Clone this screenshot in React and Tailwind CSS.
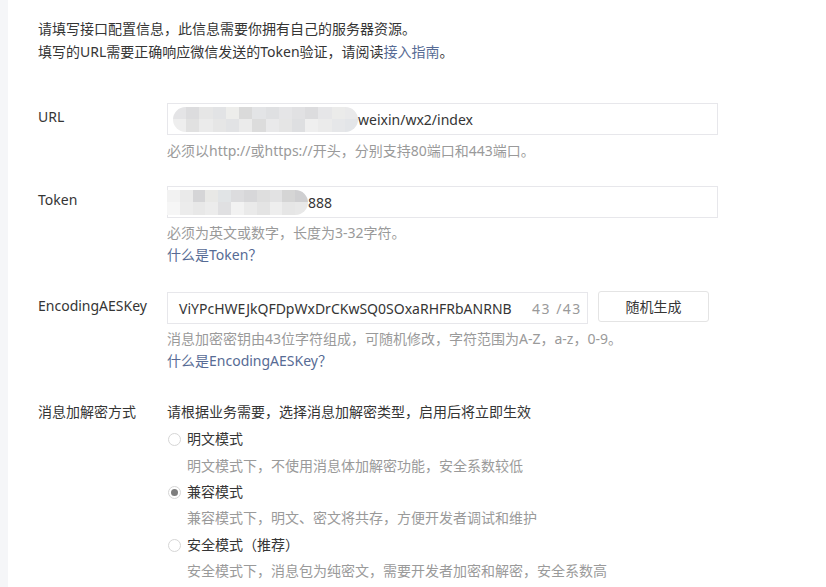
import React from 'react';

const urlBlur = [
  ['#e4e4e6', '#dcdcde', '#e6e6e6', '#e2e3e5', '#ededeb', '#dadada', '#e3e4e6', '#dfe0e2', '#e5e5e7', '#e1e1e3', '#dcdcde', '#e6e6e8', '#ebebea', '#e9e9ea'],
  ['#eeeeee', '#e1e1e1', '#ebebeb', '#e6e6e6', '#e2e3e5', '#ebebeb', '#dcdcdc', '#e9e9ea', '#e5e5e5', '#dedfe1', '#efefef', '#ebebeb', '#e6e7e9', '#e3e5e8'],
];

const tokenBlur = [
  ['#f2f2f2', '#eaeaea', '#d5d5d7', '#e8e8e6', '#e1e4e6', '#dcdcde', '#d7d7d9', '#dedede', '#e2e2e3', '#d5d5d5', '#cfcfd1'],
  ['#f6f6f6', '#ececec', '#e8e8e8', '#ececec', '#e0e0e2', '#f2f2f2', '#eaeaea', '#e4e4e4', '#eeeeee', '#e6e6e6', '#e8e8e8'],
];

const Mosaic = ({ rows, className }) => (
  <div className={`flex flex-col overflow-hidden rounded-r-full ${className}`}>
    {rows.map((row, i) => (
      <div key={i} className="flex flex-1">
        {row.map((c, j) => (
          <div key={j} className="flex-1" style={{ backgroundColor: c }} />
        ))}
      </div>
    ))}
  </div>
);

const Radio = ({ checked, label }) => (
  <div className="flex items-center leading-[22px] text-[#353535]">
    <span className="w-[13px] h-[13px] rounded-full border border-[#d6d6d6] bg-white flex items-center justify-center mr-[6px] ml-[1px]">
      {checked && <span className="w-[7px] h-[7px] rounded-full bg-[#7d7d7d]" />}
    </span>
    {label}
  </div>
);

export default function App() {
  return (
    <div className="flex min-h-[587px] bg-white text-[14px] text-[#353535] font-['Noto_Sans','Noto_Sans_CJK_SC',sans-serif]">
      <div className="w-[8px] bg-[#f5f6f8] shrink-0" />
      <div className="pl-[30px] pt-[17px] flex-1">
        {/* 说明 */}
        <div className="leading-[23px]">
          <p>请填写接口配置信息，此信息需要你拥有自己的服务器资源。</p>
          <p>填写的URL需要正确响应微信发送的Token验证，请阅读<span className="text-[#576b95]">接入指南</span>。</p>
        </div>

        {/* URL */}
        <div className="flex mt-[40px]">
          <div className="w-[129px] pt-[3px] leading-[22px]">URL</div>
          <div>
            <div className="w-[551px] h-[32px] border border-[#e7e7eb] flex items-center">
              <Mosaic rows={urlBlur} className="ml-[5px] w-[185px] h-[25px] rounded-l-full" />
              <span>weixin/wx2/index</span>
            </div>
            <p className="mt-[6px] leading-[20px] text-[#9a9a9a]">必须以http://或https://开头，分别支持80端口和443端口。</p>
          </div>
        </div>

        {/* Token */}
        <div className="flex mt-[25px]">
          <div className="w-[129px] pt-[3px] leading-[22px]">Token</div>
          <div>
            <div className="w-[551px] h-[32px] border border-[#e7e7eb] flex items-center">
              <Mosaic rows={tokenBlur} className="w-[141px] h-[25px] -ml-px" />
              <span>888</span>
            </div>
            <div className="mt-[4px] leading-[22px]">
              <p className="text-[#9a9a9a]">必须为英文或数字，长度为3-32字符。</p>
              <p className="text-[#576b95]">什么是Token？</p>
            </div>
          </div>
        </div>

        {/* EncodingAESKey */}
        <div className="flex mt-[26px]">
          <div className="w-[129px] pt-[3px] leading-[22px]">EncodingAESKey</div>
          <div>
            <div className="flex gap-[10px]">
              <div className="w-[421px] h-[32px] border border-[#e7e7eb] flex items-center pl-[11px] pr-[3px]">
                <span className="flex-1 whitespace-nowrap">ViYPcHWEJkQFDpWxDrCKwSQ0SOxaRHFRbANRNB</span>
                <span className="w-[52px] text-[#9a9a9a] whitespace-nowrap tracking-[1.5px]">43 /43</span>
              </div>
              <button className="w-[111px] h-[31px] -mt-px border border-[#e4e4e4] rounded-[3px] bg-white text-[#353535]">随机生成</button>
            </div>
            <div className="mt-[4px] leading-[22px]">
              <p className="text-[#9a9a9a]">消息加密密钥由43位字符组成，可随机修改，字符范围为A-Z，a-z，0-9。</p>
              <p className="text-[#576b95]">什么是EncodingAESKey？</p>
            </div>
          </div>
        </div>

        {/* 消息加解密方式 */}
        <div className="flex mt-[29px]">
          <div className="w-[129px] leading-[22px]">消息加解密方式</div>
          <div className="leading-[22px]">
            <p>请根据业务需要，选择消息加解密类型，启用后将立即生效</p>
            <div className="mt-[5px]"><Radio label="明文模式" /></div>
            <p className="mt-[5px] pl-[20px] text-[#9a9a9a]">明文模式下，不使用消息体加解密功能，安全系数较低</p>
            <div className="mt-[4px]"><Radio checked label="兼容模式" /></div>
            <p className="mt-[4px] pl-[20px] text-[#9a9a9a]">兼容模式下，明文、密文将共存，方便开发者调试和维护</p>
            <div className="mt-[5px]"><Radio label="安全模式（推荐）" /></div>
            <p className="mt-[4px] pl-[20px] text-[#9a9a9a]">安全模式下，消息包为纯密文，需要开发者加密和解密，安全系数高</p>
          </div>
        </div>
      </div>
    </div>
  );
}
